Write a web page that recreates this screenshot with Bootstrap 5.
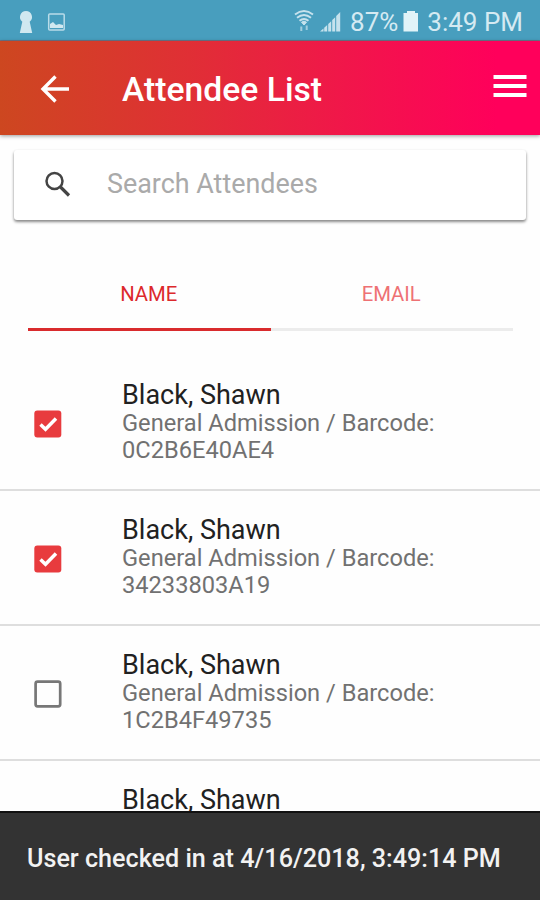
<!DOCTYPE html>
<html lang="en">
<head>
<meta charset="utf-8">
<meta name="viewport" content="width=device-width, initial-scale=1">
<title>Attendee List</title>
<link href="https://cdn.jsdelivr.net/npm/bootstrap@5.3.0/dist/css/bootstrap.min.css" rel="stylesheet">
<style>
body{font-family:Roboto,"Liberation Sans",sans-serif;background:#fefefe;color:#212121}
.screen{height:900px}
svg{display:block;flex:none}
.status-bar{height:41px;background:#489ebe;color:#d5eaf2;padding:3px 17px 0 16px;font-size:26px;line-height:37px;border-bottom:1px solid #6d7588}
.status-bar span{padding-top:2px}
.status-bar .pct{margin:0 1px 0 -1px}
.signal{margin:0 3px 0 0}
.app-bar{height:94px;background:linear-gradient(90deg,#cd4720 0%,#e02f35 35%,#f1164a 64%,#ff005b 92%);padding:2px 13px 0 40px;box-shadow:0 1px 4px rgba(0,0,0,.4);z-index:1}
.app-title{font-size:33.700px;font-weight:500;line-height:40px;color:#fff;margin-left:52px;padding-top:2px}
.search-box{height:70px;margin:15px 14px 0;border-radius:3px;background:#fff;padding:0 30px 2px;box-shadow:0 2px 3px rgba(0,0,0,.42),0 1px 3px rgba(0,0,0,.1)}
.search-box .form-control{font-size:26.900px;line-height:32px;margin-left:36px;color:#333}
.search-box .form-control::placeholder{color:#aaa;opacity:1}
.tabs{margin:37px 27px 0 28px;height:74px}
.tabs .nav-link{font-size:20.300px;line-height:24px;color:#ee7174;border-bottom:3px solid #ececec;padding:25px 1px 0 0;height:74px;border-radius:0}
.tabs .nav-link.active{color:#dc292c;border-color:#d92b2d}
.attendees{padding-top:25px}
.attendees .attendee{height:135px;border:0;border-bottom:2px solid #dedede;padding:25px 0 0 34px;background:transparent;flex:none}
.check{margin:29px 60px 0 0}
.person{font-size:27px;line-height:28px;color:#212121}
.detail{font-size:23.650px;line-height:27px;color:#717171;padding-top:1px}
.snack{height:89px;background:#333;color:#f2f2f2;border-top:2px solid #111;padding:5px 27px 0;font-size:25.150px;font-weight:500}
</style>
</head>
<body>
<div class="screen d-flex flex-column overflow-hidden position-relative">
  <div class="status-bar d-flex align-items-center flex-shrink-0">
    <svg width="20" height="28" viewBox="0 0 20 28" fill="#d0e8f0"><path d="M10 3a6 6 0 0 1 3.700 10.700L16.200 25H3.800L6.300 13.700A6 6 0 0 1 10 3z"/></svg>
    <svg class="ms-2" width="26" height="28" viewBox="0 0 26 28"><rect x="4.700" y="6" width="15.500" height="16" rx="1" fill="none" stroke="#b9dce9" stroke-width="1.500"/><path d="M6 20v-4l3-2 3 3 3-1 4 1v3z" fill="#d0e8f0"/></svg>
    <svg class="ms-auto" width="20" height="28" viewBox="0 0 20 28" fill="none" stroke="#c6e2ed" stroke-width="1.900"><path d="M1 6.500q9-7 18 0M3 9.800q7-5.500 14 0M5.500 12.800q4.500-3.600 9 0"/><path d="M7.500 14.200q2.500-2 5 0L10 17z" fill="#c6e2ed" stroke-width="1"/><path d="M7.300 23v-4.500M12.700 17.500v4.500" stroke-width="2" opacity=".7"/></svg>
    <svg class="signal" width="34" height="28" viewBox="0 0 34 28" fill="#c6e2ed"><path d="M6 23.500l3.500-3v3zM10.200 19.800l3-2.700v6.400h-3zM14.200 15.900l3-2.700v10.300h-3zM18.200 12l3-2.700v14.200h-3zM22.200 8l4-4v19.500h-4z"/></svg>
    <span class="pct">87%</span>
    <svg width="28" height="28" viewBox="0 0 28 28"><path d="M8 3h8v2h3v18.500H4.500V5H8z" fill="#e1f3f8"/></svg>
    <span>3:49 PM</span>
  </div>
  <header class="app-bar d-flex align-items-center flex-shrink-0 position-relative">
    <svg width="30" height="30" viewBox="0 0 30 30" fill="none" stroke="#fff" stroke-width="3.400"><path d="M29 15H3M15.500 2.500L3 15l12.500 12.500"/></svg>
    <div class="app-title">Attendee List</div>
    <svg class="ms-auto" width="34" height="30" viewBox="0 0 34 30" fill="#fff"><path d="M.500 1h33v4H.500zM.500 10h33v4H.500zM.500 19h33v4H.500z"/></svg>
  </header>
  <div class="search-box d-flex align-items-center flex-shrink-0">
    <svg width="27" height="27" viewBox="0 0 27 27" fill="none" stroke="#444"><circle cx="10.500" cy="10" r="8" stroke-width="2.500"/><path d="M16.500 16l8.500 8.500" stroke-width="3.200"/></svg>
    <input class="form-control border-0 p-0 bg-transparent shadow-none" type="text" placeholder="Search Attendees" aria-label="Search Attendees">
  </div>
  <nav class="tabs nav nav-fill flex-shrink-0">
    <a class="nav-link active w-50" href="#">NAME</a>
    <a class="nav-link w-50" href="#">EMAIL</a>
  </nav>
  <div class="attendees list-group list-group-flush flex-grow-1 overflow-hidden">
    <div class="attendee list-group-item d-flex align-items-start">
      <svg class="check" width="28" height="28" viewBox="0 0 28 28"><rect x=".300" y=".500" width="27" height="27" rx="3" fill="#e83b3e"/><path d="M6.500 14.500l5 4.700L22 8.500" fill="none" stroke="#fff" stroke-width="3.500"/></svg>
      <div><div class="person">Black, Shawn</div><div class="detail">General Admission / Barcode:<br>0C2B6E40AE4</div></div>
    </div>
    <div class="attendee list-group-item d-flex align-items-start">
      <svg class="check" width="28" height="28" viewBox="0 0 28 28"><rect x=".300" y=".500" width="27" height="27" rx="3" fill="#e83b3e"/><path d="M6.500 14.500l5 4.700L22 8.500" fill="none" stroke="#fff" stroke-width="3.500"/></svg>
      <div><div class="person">Black, Shawn</div><div class="detail">General Admission / Barcode:<br>34233803A19</div></div>
    </div>
    <div class="attendee list-group-item d-flex align-items-start">
      <svg class="check" width="28" height="28" viewBox="0 0 28 28"><rect x="1.600" y="1.700" width="24.600" height="24.600" rx="2" fill="none" stroke="#777" stroke-width="2.700"/></svg>
      <div><div class="person">Black, Shawn</div><div class="detail">General Admission / Barcode:<br>1C2B4F49735</div></div>
    </div>
    <div class="attendee list-group-item d-flex align-items-start">
      <svg class="check" width="28" height="28" viewBox="0 0 28 28"><rect x="1.600" y="1.700" width="24.600" height="24.600" rx="2" fill="none" stroke="#777" stroke-width="2.700"/></svg>
      <div><div class="person">Black, Shawn</div></div>
    </div>
  </div>
  <div class="snack d-flex align-items-center flex-shrink-0" role="status"><span class="text-nowrap">User checked in at 4/16/2018, 3:49:14 PM</span></div>
</div>
<script src="https://cdn.jsdelivr.net/npm/bootstrap@5.3.0/dist/js/bootstrap.bundle.min.js"></script>
</body>
</html>
